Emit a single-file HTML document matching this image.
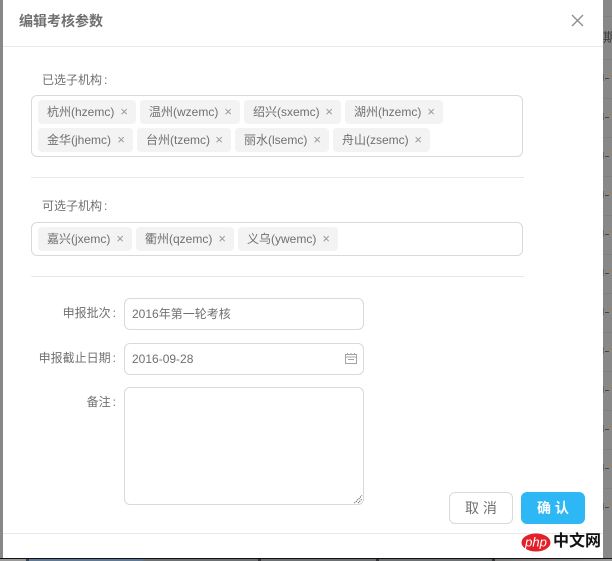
<!DOCTYPE html>
<html><head><meta charset="utf-8">
<style>
*{box-sizing:border-box}
html,body{margin:0;padding:0;width:612px;height:561px;overflow:hidden;background:#888}
body{position:relative;font-family:"Liberation Sans","Noto Sans CJK SC",sans-serif;font-size:12px;color:#666}
.a{position:absolute}
.modal{left:3px;top:0;width:600px;height:558px;background:#fff}
.t{position:absolute;height:24px;line-height:24px;background:#f3f3f3;border-radius:4px;color:#707070;padding-left:9px;white-space:nowrap}
.t i{position:absolute;right:8px;top:0;font-style:normal;color:#999;font-size:13px}
.box{position:absolute;border:1px solid #d9d9d9;border-radius:6px;background:#fff}
.line{position:absolute;height:1px;background:#e8e8e8}
.l{position:absolute;white-space:nowrap;line-height:16px;color:#707070}
.l b{font-weight:400;margin-left:2px}
.in{position:absolute;left:124px;width:240px;border:1px solid #d9d9d9;border-radius:6px;background:#fff;padding-left:7px;color:#707070;white-space:nowrap}
.btn{position:absolute;top:492px;width:64px;height:32px;line-height:30px;border-radius:6px;text-align:center;font-size:14px}
</style></head><body>
<div class="a" style="left:603px;top:0;width:9px;height:558px;background:#888;overflow:hidden">
<span class="a" style="left:0;top:30px;color:#3c3c3c;font-size:13px;line-height:15px">期</span>
<div class="a" style="left:0;top:16px;width:9px;height:1px;background:#808080;box-shadow:0 43px 0 #808080,0 82px 0 #808080,0 121px 0 #808080,0 160px 0 #808080,0 199px 0 #808080,0 238px 0 #808080,0 277px 0 #808080,0 316px 0 #808080,0 355px 0 #808080,0 394px 0 #808080,0 433px 0 #808080,0 472px 0 #808080"></div>
<div class="a" style="left:0;top:74px;width:1px;height:7px;background:#5b6b7c;box-shadow:0 39px 0 #5b6b7c,0 78px 0 #5b6b7c,0 117px 0 #5b6b7c,0 156px 0 #5b6b7c,0 195px 0 #5b6b7c,0 234px 0 #5b6b7c,0 273px 0 #5b6b7c,0 312px 0 #5b6b7c,0 351px 0 #5b6b7c,0 390px 0 #5b6b7c,0 429px 0 #5b6b7c"></div>
<div class="a" style="left:2px;top:78px;width:4px;height:1px;background:#444;box-shadow:0 39px 0 #444,0 78px 0 #444,0 117px 0 #444,0 156px 0 #444,0 195px 0 #444,0 234px 0 #444,0 273px 0 #444,0 312px 0 #444,0 351px 0 #444,0 390px 0 #444,0 429px 0 #444"></div>
<div class="a" style="left:7px;top:75px;width:2px;height:1px;background:#a08050;box-shadow:0 39px 0 #a08050,0 78px 0 #a08050,0 117px 0 #a08050,0 156px 0 #a08050,0 195px 0 #a08050,0 234px 0 #a08050,0 273px 0 #a08050,0 312px 0 #a08050,0 351px 0 #a08050,0 390px 0 #a08050,0 429px 0 #a08050"></div>
</div>
<div class="a modal"></div>
<div class="a" style="left:0;top:558px;width:612px;height:1px;background:#111"></div>
<div class="a" style="left:0;top:559px;width:612px;height:2px;background:linear-gradient(90deg,#999 0,#999 26px,#33445a 26px,#33445a 29px,#5f7a96 29px,#5f7a96 143px,#6b7073 144px,#6b7073 258px,#333 258px,#333 261px,#6b7073 261px,#6b7073 376px,#333 376px,#333 379px,#6b7073 379px,#6b7073 492px,#333 492px,#333 495px,#777 495px,#999 612px)"></div>

<div class="l" style="left:19px;top:13px;font-size:14px;font-weight:700;color:#707070">编辑考核参数</div>
<svg class="a" style="left:571px;top:14px" width="13" height="13" viewBox="0 0 13 13"><path d="M1 1L12 12M12 1L1 12" stroke="#8c8c8c" stroke-width="1.3" fill="none"/></svg>
<div class="line" style="left:3px;top:46px;width:600px"></div>

<div class="l" style="left:42px;top:72px">已选子机构<b>:</b></div>
<div class="box" style="left:31px;top:95px;width:492px;height:62px"></div>
<div class="t" style="left:38px;top:100px;width:98px">杭州(hzemc)<i>×</i></div>
<div class="t" style="left:140px;top:100px;width:100px">温州(wzemc)<i>×</i></div>
<div class="t" style="left:244px;top:100px;width:97px">绍兴(sxemc)<i>×</i></div>
<div class="t" style="left:345px;top:100px;width:98px">湖州(hzemc)<i>×</i></div>
<div class="t" style="left:38px;top:128px;width:95px">金华(jhemc)<i>×</i></div>
<div class="t" style="left:137px;top:128px;width:94px">台州(tzemc)<i>×</i></div>
<div class="t" style="left:235px;top:128px;width:94px">丽水(lsemc)<i>×</i></div>
<div class="t" style="left:333px;top:128px;width:97px">舟山(zsemc)<i>×</i></div>
<div class="line" style="left:31px;top:177px;width:493px"></div>

<div class="l" style="left:42px;top:198px">可选子机构<b>:</b></div>
<div class="box" style="left:31px;top:222px;width:492px;height:34px"></div>
<div class="t" style="left:38px;top:227px;width:94px">嘉兴(jxemc)<i>×</i></div>
<div class="t" style="left:136px;top:227px;width:98px">衢州(qzemc)<i>×</i></div>
<div class="t" style="left:238px;top:227px;width:100px">义乌(ywemc)<i>×</i></div>
<div class="line" style="left:31px;top:276px;width:493px"></div>

<div class="l" style="right:496px;top:305px">申报批次<b>:</b></div>
<div class="in" style="top:298px;height:32px;line-height:30px">2016年第一轮考核</div>
<div class="l" style="right:496px;top:350px">申报截止日期<b>:</b></div>
<div class="in" style="top:343px;height:32px;line-height:30px">2016-09-28</div>
<svg class="a" style="left:344px;top:352px" width="14" height="13" viewBox="0 0 14 13"><path d="M1.5 2.5H12.5V11.5H1.5ZM1.5 5H12.5M4 7.5H10M3.5 1V2.5M7 1V2.5M10.5 1V2.5" stroke="#a5a5a5" stroke-width="1" fill="none"/></svg>
<div class="l" style="right:496px;top:394px">备注<b>:</b></div>
<div class="in" style="top:387px;height:118px"></div>
<svg class="a" style="left:354px;top:495px" width="9" height="9" viewBox="0 0 9 9"><path d="M0.5 8L8 0.5M4 8L8 4" stroke="#444" stroke-width="1" stroke-dasharray="1 1" fill="none"/></svg>

<div class="btn" style="left:449px;border:1px solid #d9d9d9;background:#fff;color:#707070">取 消</div>
<div class="btn" style="left:521px;background:#2db7f5;color:#fff;font-weight:700;line-height:32px">确 认</div>
<div class="line" style="left:3px;top:533px;width:600px"></div>

<svg class="a" style="left:521px;top:533px" width="30" height="19" viewBox="0 0 30 19"><ellipse cx="15" cy="9.5" rx="14.5" ry="9" fill="#e3202a"/><text x="15" y="13.5" text-anchor="middle" font-family="Liberation Sans,sans-serif" font-size="13" font-style="italic" fill="#fff">php</text></svg>
<div class="l" style="left:553px;top:533px;font-size:16px;line-height:18px;color:#111;font-weight:700">中文网</div>
</body></html>
